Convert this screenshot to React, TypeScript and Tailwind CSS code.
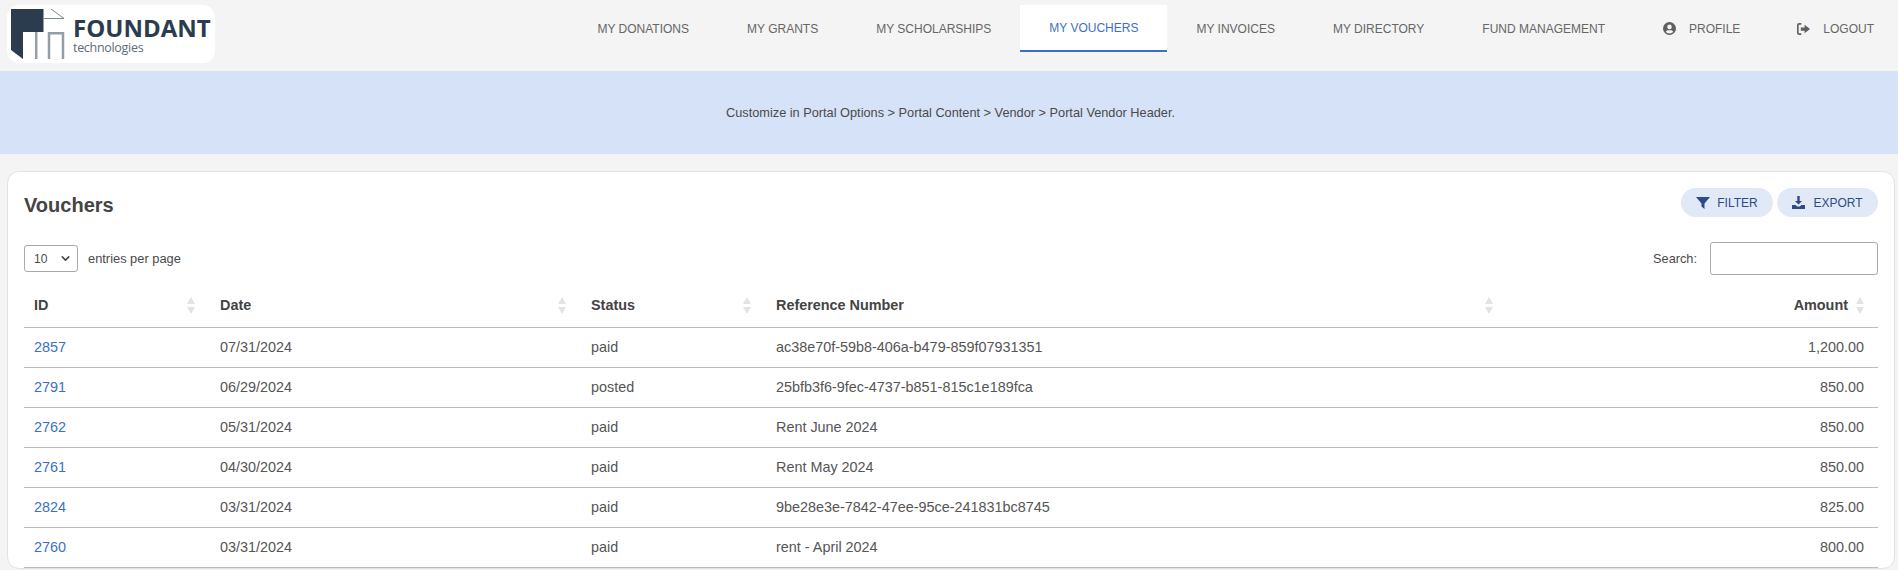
import { ChevronDown } from "lucide-react";

const navItems = ["MY DONATIONS", "MY GRANTS", "MY SCHOLARSHIPS"];
const navItemsAfter = ["MY INVOICES", "MY DIRECTORY", "FUND MANAGEMENT"];

const rows = [
  { id: "2857", date: "07/31/2024", status: "paid", ref: "ac38e70f-59b8-406a-b479-859f07931351", amount: "1,200.00" },
  { id: "2791", date: "06/29/2024", status: "posted", ref: "25bfb3f6-9fec-4737-b851-815c1e189fca", amount: "850.00" },
  { id: "2762", date: "05/31/2024", status: "paid", ref: "Rent June 2024", amount: "850.00" },
  { id: "2761", date: "04/30/2024", status: "paid", ref: "Rent May 2024", amount: "850.00" },
  { id: "2824", date: "03/31/2024", status: "paid", ref: "9be28e3e-7842-47ee-95ce-241831bc8745", amount: "825.00" },
  { id: "2760", date: "03/31/2024", status: "paid", ref: "rent - April 2024", amount: "800.00" },
];

const Logo = () => (
  <div className="flex h-[58px] w-[208px] items-center rounded-xl bg-white pl-[3px]">
    <svg width="56" height="52" viewBox="0 0 56 52" className="shrink-0">
      <path d="M1 1H33.5V24H13V51L1 42Z" fill="#2b3c4e" />
      <path d="M33.5 10.5H54L41 1" fill="none" stroke="#7b8793" strokeWidth="1" />
      <path d="M26.2 24V51M39 51V25.2H53V51" fill="none" stroke="#949ea8" strokeWidth="2.5" />
    </svg>
    <div className="ml-[7px] flex flex-col pt-px font-['Open_Sans',sans-serif] text-[#2b3c4e]">
      <span className="text-[24px] leading-[26px] font-bold">FOUNDANT</span>
      <span className="text-[12.5px] leading-[14px] tracking-[-0.3px] text-[#5f6b77]">technologies</span>
    </div>
  </div>
);

const SortIcon = () => (
  <svg width="8" height="17" viewBox="0 0 8 17" className="shrink-0" fill="#e3e3e3">
    <path d="M4 0L8 7H0Z" />
    <path d="M4 17L0 10H8Z" />
  </svg>
);

const ProfileIcon = () => (
  <svg width="13" height="13" viewBox="0 0 12 12" fill="#5f5f5f">
    <path fillRule="evenodd" d="M6 0a6 6 0 1 0 0 12A6 6 0 0 0 6 0Zm0 2.4a2.1 2.1 0 1 1 0 4.2 2.1 2.1 0 0 1 0-4.2Zm0 8.2c-1.4 0-2.6-.6-3.4-1.6.3-.8 1.1-1.4 2-1.4h2.8c.9 0 1.7.6 2 1.4-.8 1-2 1.6-3.4 1.6Z" />
  </svg>
);

const LogoutIcon = () => (
  <svg width="13" height="12" viewBox="0 0 12 11" fill="#5f5f5f">
    <path d="M0 2a2 2 0 0 1 2-2h2v1.5H2a.5.5 0 0 0-.5.5v7a.5.5 0 0 0 .5.5h2V11H2a2 2 0 0 1-2-2Z" />
    <path d="M7 1.5L12 5.5L7 9.5V7H3.5V4H7Z" />
  </svg>
);

const FilterIcon = () => (
  <svg width="14" height="12" viewBox="0 0 14 12" fill="#2f4a8a">
    <path d="M0 0H14L8.5 6.5V12L5.5 9.5V6.5Z" />
  </svg>
);

const ExportIcon = () => (
  <svg width="13" height="13" viewBox="0 0 13 13" fill="#2f4a8a">
    <path d="M5.3 0H7.7V5H10L6.5 8.6L3 5H5.3Z" />
    <path d="M0 9H3.6L5.2 10.4H7.8L9.4 9H13V13H0Z" />
  </svg>
);

const App = () => {
  return (
    <div className="h-[570px] overflow-hidden bg-[#f4f4f4] font-['Liberation_Sans',Arial,sans-serif] text-[#4a4a4a]">
      {/* Top nav */}
      <header className="flex h-[71px] items-start justify-between pt-[5px] pl-[7px]">
        <Logo />
        <nav className="flex items-start text-[12px] text-[#666666]">
          {navItems.map((label) => (
            <a key={label} className="flex h-[47px] items-center px-[29px]">
              {label}
            </a>
          ))}
          <a className="flex h-[47px] items-center border-b-2 border-[#3b6fc9] bg-white px-[29px] text-[#3b6fc9]">
            MY VOUCHERS
          </a>
          {navItemsAfter.map((label) => (
            <a key={label} className="flex h-[47px] items-center px-[29px]">
              {label}
            </a>
          ))}
          <a className="flex h-[47px] items-center gap-[13px] px-[29px]">
            <ProfileIcon />
            PROFILE
          </a>
          <a className="flex h-[47px] items-center gap-[13px] pr-[24px] pl-[28px]">
            <LogoutIcon />
            LOGOUT
          </a>
        </nav>
      </header>

      {/* Portal header */}
      <section className="flex h-[83px] items-center justify-center bg-[#d6e2f8] pl-[3px] text-[12.75px]">
        Customize in Portal Options &gt; Portal Content &gt; Vendor &gt; Portal Vendor Header.
      </section>

      {/* Vouchers card */}
      <main className="mt-[17px] mr-[3px] ml-[7px] rounded-xl border border-[#e2e2e2] bg-white px-[16px] pt-[16px]">
        <div className="flex h-[29px] items-start justify-between">
          <h1 className="mt-[3px] text-[20px] leading-[28px] font-bold text-[#444444]">Vouchers</h1>
          <div className="flex gap-1">
            <button className="flex h-[29px] w-[92px] items-center justify-center gap-[7px] rounded-full bg-[#e2e9f6] text-[12px] text-[#2f4a8a]">
              <FilterIcon />
              FILTER
            </button>
            <button className="flex h-[29px] w-[101px] items-center justify-center gap-2 rounded-full bg-[#e2e9f6] text-[12px] text-[#2f4a8a]">
              <ExportIcon />
              EXPORT
            </button>
          </div>
        </div>

        <div className="mt-[25px] flex items-center justify-between">
          <div className="flex items-center gap-[10px] text-[12.85px]">
            <div className="flex h-[27px] w-[54px] items-center justify-between rounded-[3px] border border-[#aaaaaa] pr-[5px] pl-[9px] text-[12px]">
              10
              <ChevronDown size={13} strokeWidth={3} />
            </div>
            entries per page
          </div>
          <label className="flex items-center gap-[13px] text-[12.75px]">
            Search:
            <input className="h-[33px] w-[168px] rounded-[3px] border border-[#aaaaaa] bg-white" />
          </label>
        </div>

        <table className="mt-[10px] w-full table-fixed border-collapse text-[14.4px] text-[#555555]">
          <colgroup>
            <col className="w-[186px]" />
            <col className="w-[371px]" />
            <col className="w-[185px]" />
            <col className="w-[742px]" />
            <col />
          </colgroup>
          <thead>
            <tr className="h-[42px] border-b border-[#bbbbbb] text-left text-[#444444]">
              {["ID", "Date", "Status", "Reference Number"].map((label) => (
                <th key={label} className="px-[10px] font-bold">
                  <div className="flex items-center justify-between pr-[5px]">
                    {label}
                    <SortIcon />
                  </div>
                </th>
              ))}
              <th className="pr-[14px] pl-[10px] font-bold">
                <div className="flex items-center justify-end gap-[8px]">
                  Amount
                  <SortIcon />
                </div>
              </th>
            </tr>
          </thead>
          <tbody>
            {rows.map((row) => (
              <tr key={row.id} className="h-[40px] border-b border-[#bbbbbb]">
                <td className="px-[10px] pt-[2px] text-[#3b6fc9]">{row.id}</td>
                <td className="px-[10px] pt-[2px]">{row.date}</td>
                <td className="px-[10px] pt-[2px]">{row.status}</td>
                <td className="px-[10px] pt-[2px]">{row.ref}</td>
                <td className="pt-[2px] pr-[14px] pl-[10px] text-right">{row.amount}</td>
              </tr>
            ))}
          </tbody>
        </table>
      </main>
    </div>
  );
};

export default App;
